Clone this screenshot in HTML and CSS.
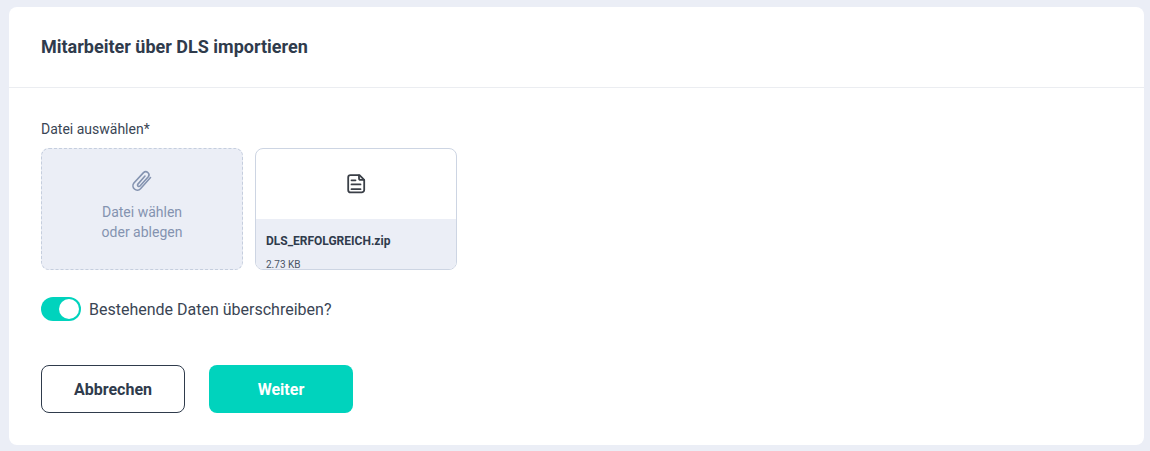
FILE: index.html
```html
<!DOCTYPE html>
<html lang="de">
<head>
	<meta charset="UTF-8">
	<title>Mitarbeiter importieren</title>
	<link rel="stylesheet" href="styles.css">
</head>
<body>
	<div class="card">
		<div class="cardHead">Mitarbeiter über DLS importieren</div>
		<div class="cardBody">
			<div class="fieldLabel">Datei auswählen*</div>
			<div class="files">
				<div class="dropBox">
					<svg class="clip" width="24" height="24" viewBox="0 0 24 24" fill="none" stroke="#8493b0" stroke-width="1.6" stroke-linecap="round" stroke-linejoin="round">
						<path d="M20.500 8.500L10.500 19.800a4.400 4.400 0 0 1-6.600-5.800L13.500 3.600a3.200 3.200 0 0 1 4.800 4.200L10 17a1.400 1.400 0 0 1-2.100-1.900L15 7"/>
					</svg>
					<div class="dropText">Datei wählen<br>oder ablegen</div>
				</div>
				<div class="fileBox">
					<div class="filePreview">
						<svg width="24" height="24" viewBox="0 0 24 24" fill="none" stroke="#3a3f47" stroke-width="1.8" stroke-linejoin="round" stroke-linecap="round">
							<path d="M6.500 3.200h9l4.700 4.700v10a2.500 2.500 0 0 1-2.500 2.500H6.700a2.500 2.500 0 0 1-2.500-2.500V5.500a2.300 2.300 0 0 1 2.300-2.300z"/>
							<path d="M15 3.500v2.700a1.700 1.700 0 0 0 1.700 1.700h3.200"/>
							<path d="M7.500 8.300h4M7.500 12.400h9M7.500 17.200h9"/>
						</svg>
					</div>
					<div class="fileInfo">
						<div class="fileName">DLS_ERFOLGREICH.zip</div>
						<div class="fileSize">2.73 KB</div>
					</div>
				</div>
			</div>
			<div class="toggleRow">
				<span class="toggle"><span class="knob"></span></span>
				<span class="toggleText">Bestehende Daten überschreiben?</span>
			</div>
			<div class="buttons">
				<button class="btn btnCancel">Abbrechen</button>
				<button class="btn btnNext">Weiter</button>
			</div>
		</div>
	</div>
</body>
</html>
```
FILE: styles.css
```css
*{
	margin: 0;
	padding: 0;
	box-sizing: border-box;
}
html,body{
	height: 100%;
}
body{
	background: #ebeef6;
	font-family: Roboto, "Liberation Sans", sans-serif;
	color: #2f3b4c;
	padding: 7px 6px 6px 9px;
	overflow: hidden;
}
.card{
	height: 438px;
	background: #fff;
	border-radius: 8px;
}
.cardHead{
	height: 81px;
	border-bottom: 1px solid #ebedf1;
	padding: 29px 32px 0;
	font-size: 18px;
	line-height: 21px;
	font-weight: 700;
}
.cardBody{
	padding: 33px 32px 0;
}
.fieldLabel{
	font-size: 14px;
	line-height: 16px;
	color: #3a4554;
}
.files{
	display: flex;
	gap: 12px;
	margin-top: 11px;
}
.dropBox{
	width: 202px;
	height: 122px;
	background: #ebeef6;
	border: 1px dashed #c5cede;
	border-radius: 8px;
	display: flex;
	flex-direction: column;
	align-items: center;
	padding-top: 20px;
}
.dropText{
	margin-top: 9px;
	font-size: 14px;
	line-height: 20px;
	color: #8493b0;
	text-align: center;
}
.fileBox{
	width: 202px;
	height: 122px;
	border: 1px solid #cdd5e3;
	border-radius: 8px;
	overflow: hidden;
}
.filePreview{
	height: 70px;
	display: flex;
	justify-content: center;
	padding-top: 23px;
}
.fileInfo{
	height: 50px;
	background: #ebeef6;
	padding: 15px 10px 0;
}
.fileName{
	font-size: 12px;
	line-height: 14px;
	font-weight: 700;
}
.fileSize{
	margin-top: 11px;
	font-size: 10px;
	line-height: 12px;
	color: #4a5565;
}
.toggleRow{
	display: flex;
	align-items: center;
	gap: 8px;
	margin-top: 27px;
}
.toggle{
	width: 40px;
	height: 24px;
	background: #00d3bd;
	border-radius: 12px;
	display: flex;
	justify-content: flex-end;
	align-items: center;
	padding-right: 2px;
}
.knob{
	width: 20px;
	height: 20px;
	background: #fff;
	border-radius: 50%;
}
.toggleText{
	font-size: 16px;
	line-height: 19px;
	color: #3a4554;
}
.buttons{
	display: flex;
	gap: 24px;
	margin-top: 44px;
}
.btn{
	width: 144px;
	height: 48px;
	border-radius: 8px;
	font-family: inherit;
	font-size: 16px;
	font-weight: 700;
}
.btnCancel{
	background: #fff;
	border: 1px solid #2f3b4c;
	color: #2f3b4c;
}
.btnNext{
	background: #00d3bd;
	border: 0;
	color: #fff;
}
```
